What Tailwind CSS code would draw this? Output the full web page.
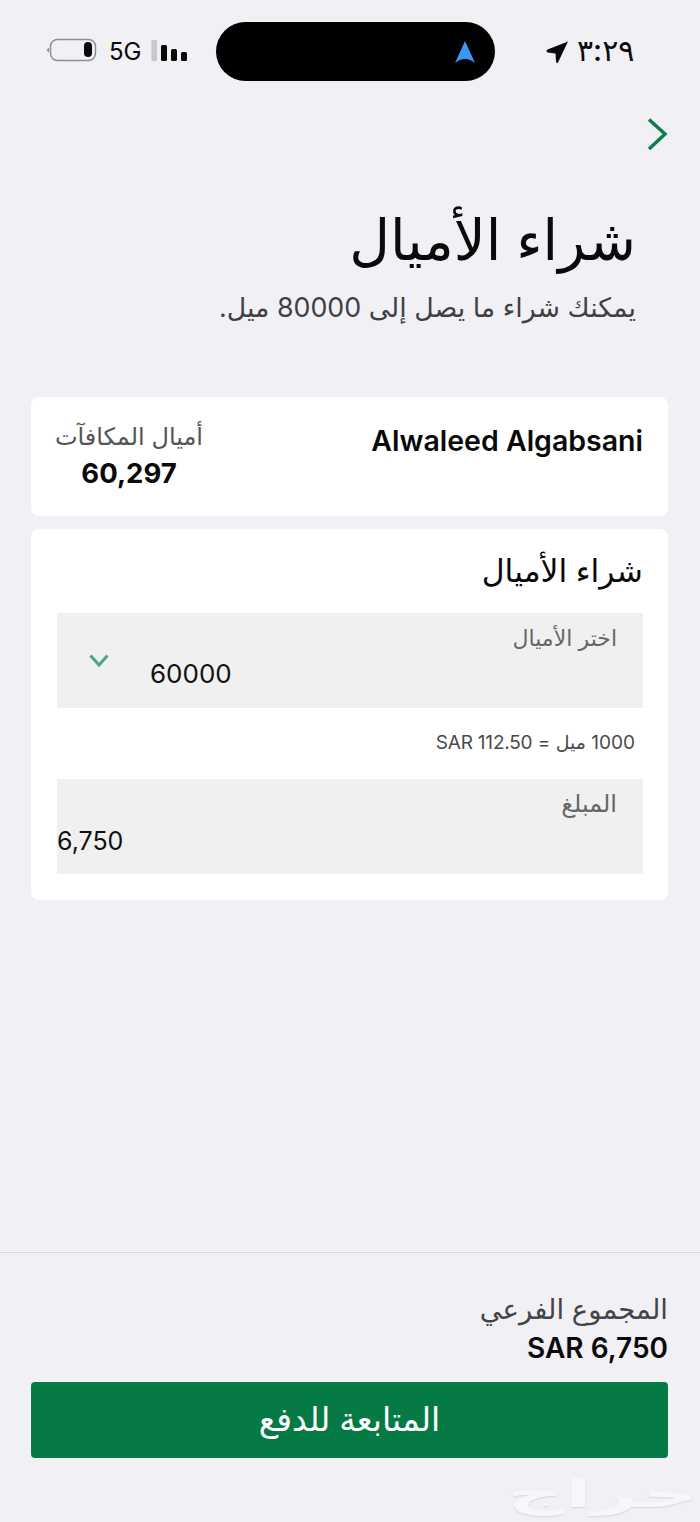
<!DOCTYPE html>
<html lang="ar" dir="rtl">
<head>
  <meta charset="UTF-8" />
  <meta name="viewport" content="width=device-width, initial-scale=1.0"/>
  <title>شراء الأميال</title>
  <script src="https://cdn.jsdelivr.net/npm/@tailwindcss/browser@4"></script>
</head>
<body class="bg-[#f0f0f5] font-['Inter','DejaVu_Sans',sans-serif] text-[#0a0a0a]">
<div class="relative w-[700px] h-[1522px] overflow-hidden flex flex-col">

  <!-- status bar -->
  <div dir="ltr" class="h-[103px] shrink-0 flex items-start pt-[22px] pl-[46px]">
    <div class="flex items-center h-[59px] w-[170px]">
      <svg width="51" height="24" viewBox="0 0 51 24" class="mt-[-3px]">
        <path d="M0.5 12 L3 9.5 V14.5 Z" fill="#8a8a8e"/>
        <rect x="4.5" y="1.5" width="45" height="21" rx="7" fill="none" stroke="#8e8e93" stroke-width="1.5"/>
        <rect x="38" y="4" width="8" height="15" rx="4" fill="#0a0a0a"/>
      </svg>
      <span class="ml-[12px] text-[24px] leading-none">5G</span>
      <svg width="37" height="24" viewBox="0 0 37 24" class="ml-[9px] mt-[-2px]">
        <rect x="0.5" y="1" width="5.5" height="21" fill="#c8c8cc"/>
        <rect x="10" y="6" width="6" height="16" rx="1.5" fill="#0a0a0a"/>
        <rect x="20" y="10" width="6" height="12" rx="1.5" fill="#0a0a0a"/>
        <rect x="30" y="13" width="6" height="9" rx="1.5" fill="#0a0a0a"/>
      </svg>
    </div>
    <div class="w-[279px] h-[59px] rounded-[30px] bg-black flex items-center justify-end pr-[19px]">
      <svg width="22" height="24" viewBox="0 0 22 24">
        <path d="M11 1 L21 23 Q11 15 1 23 Z" fill="#3b97f3"/>
      </svg>
    </div>
    <div class="flex items-center h-[59px] ml-[51px]">
      <svg width="23" height="24" viewBox="0 0 23 24">
        <path d="M22 1.5 L12 22.5 Q10.5 24 10 21.5 L9.5 13.5 L1.5 12.5 Q-0.5 11 1.5 9.5 Z" fill="#0a0a0a"/>
      </svg>
      <span class="ml-[8px] mt-[-3px] text-[30px] leading-none font-medium">٣:٢٩</span>
    </div>
  </div>

  <!-- back chevron -->
  <div class="h-[62px] pr-[31px] flex items-center shrink-0">
    <svg width="22" height="32" viewBox="0 0 22 32" fill="none" stroke="#0c7f4c" stroke-width="3.5">
      <path d="M2 1.5 L18 16 L2 31"/>
    </svg>
  </div>

  <!-- heading -->
  <div class="pr-[64px] pt-[40px] shrink-0">
    <h1 class="text-[56px] leading-[70px] font-medium">شراء الأميال</h1>
    <p class="text-[26.8px] leading-[34px] mt-[15px] text-[#3f3f46]">يمكنك شراء ما يصل إلى 80000 ميل.</p>
  </div>

  <!-- name and balance -->
  <div class="ml-[31px] mr-[32px] mt-[73px] h-[119px] bg-white rounded-lg flex justify-between pt-[26px] pr-[25px] pl-[26px] shrink-0">
    <div class="text-[28.5px] leading-[36px] font-semibold font-['Inter',sans-serif]">Alwaleed Algabsani</div>
    <div class="w-[146px] text-right">
      <div class="text-[24px] leading-[28px] text-[#555] whitespace-nowrap">أميال المكافآت</div>
      <div class="text-[27.5px] leading-[36px] font-bold mt-[4px] text-center pr-[2px]">60,297</div>
    </div>
  </div>

  <!-- purchase card -->
  <div class="ml-[31px] mr-[32px] mt-[13px] h-[371px] bg-white rounded-lg pr-[25px] pl-[26px] shrink-0">
    <h2 class="text-[31.5px] leading-[40px] font-medium mt-[22px]">شراء الأميال</h2>
    <div class="mt-[22px] h-[95px] bg-[#f0f0f0] relative pt-[12px] pr-[26px]">
      <div class="text-[22px] leading-[26px] text-[#666]">اختر الأميال</div>
      <div dir="ltr" class="flex items-start pl-[32px] mt-[2px]">
        <svg width="20" height="14" viewBox="0 0 20 14" fill="none" stroke="#4aa585" stroke-width="3" class="mt-[1px]">
          <path d="M1.5 1.5 L10 11 L18.5 1.5"/>
        </svg>
        <span class="ml-[41px] mt-[5px] text-[26px] leading-[32px] text-[#111]">60000</span>
      </div>
    </div>
    <div class="mt-[22px] pr-[8px] text-[19px] leading-[26px] text-[#4a4a4a] tracking-[-0.2px]">
      <span dir="ltr">1000</span> ميل = <span dir="ltr">SAR 112.50</span>
    </div>
    <div class="mt-[23px] h-[95px] bg-[#f0f0f0] pt-[12px] pr-[26px]">
      <div class="text-[24px] leading-[26px] text-[#666]">المبلغ</div>
      <div dir="ltr" class="mt-[8px] text-[25px] leading-[32px] text-left text-[#111]">6,750</div>
    </div>
  </div>

  <!-- footer -->
  <div class="mt-auto border-t border-[#d6d6dc] h-[270px] pl-[31px] pr-[32px] pt-[38px] shrink-0">
    <div class="text-[27.5px] leading-[36px] text-[#444]">المجموع الفرعي</div>
    <div class="text-[28px] leading-[38px] font-semibold mt-[2px]"><span dir="ltr">SAR 6,750</span></div>
    <button class="mt-[15px] w-full h-[76px] bg-[#057a44] rounded text-white text-[33px] font-medium">المتابعة للدفع</button>
  </div>

  <!-- haraj watermark -->
  <div class="absolute left-[510px] top-[1468px] w-[186px] text-center text-[38px] leading-[50px] font-bold text-[#f7f7fa] scale-x-[2.1] [text-shadow:0_1px_1px_#d4d4da]">حراج</div>
</div>
</body>
</html>
